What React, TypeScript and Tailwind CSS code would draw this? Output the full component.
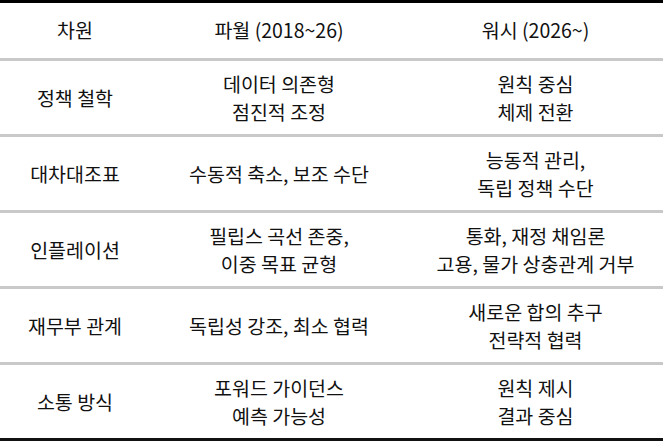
const rows: { label: string; powell: string[]; warsh: string[] }[] = [
  { label: "정책 철학", powell: ["데이터 의존형", "점진적 조정"], warsh: ["원칙 중심", "체제 전환"] },
  { label: "대차대조표", powell: ["수동적 축소, 보조 수단"], warsh: ["능동적 관리,", "독립 정책 수단"] },
  { label: "인플레이션", powell: ["필립스 곡선 존중,", "이중 목표 균형"], warsh: ["통화, 재정 채임론", "고용, 물가 상충관계 거부"] },
  { label: "재무부 관계", powell: ["독립성 강조, 최소 협력"], warsh: ["새로운 합의 추구", "전략적 협력"] },
  { label: "소통 방식", powell: ["포워드 가이던스", "예측 가능성"], warsh: ["원칙 제시", "결과 중심"] },
];

const cell = "flex flex-col items-center justify-center text-center";

export default function App() {
  return (
    <div className="h-[443px] w-[663px] bg-white text-[19.5px] leading-[28px] text-[#111] [font-family:'Noto_Sans_CJK_KR','Noto_Sans',sans-serif]">
      <div className="border-t-[3px] border-b-[3px] border-t-black border-b-[#111]">
        <div className="grid h-[55px] grid-cols-[150px_258px_1fr] pb-[2px]">
          <div className={cell}>차원</div>
          <div className={cell}>파월 (2018~26)</div>
          <div className={cell}>워시 (2026~)</div>
        </div>
        {rows.map((r) => (
          <div
            key={r.label}
            className="grid h-[76px] grid-cols-[150px_258px_1fr] border-t-[3px] border-[#c9c9c9]"
          >
            <div className={cell}>{r.label}</div>
            <div className={cell}>
              {r.powell.map((t) => (
                <span key={t}>{t}</span>
              ))}
            </div>
            <div className={cell}>
              {r.warsh.map((t) => (
                <span key={t}>{t}</span>
              ))}
            </div>
          </div>
        ))}
      </div>
    </div>
  );
}
